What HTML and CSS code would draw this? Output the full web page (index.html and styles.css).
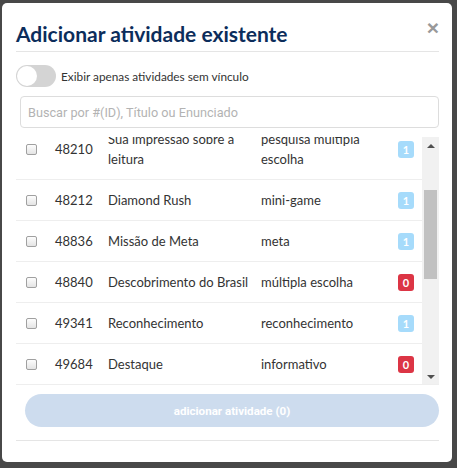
FILE: index.html
```html
<!DOCTYPE html>
<html lang="pt-BR">
<head>
  <meta charset="UTF-8" />
  <meta name="viewport" content="width=device-width, initial-scale=1.0" />
  <title>Adicionar atividade existente</title>
  <link rel="stylesheet" href="styles.css">
</head>
<body>
  <div class="modal">
    <header class="modal-header">
      <h2>Adicionar atividade existente</h2>
      <button class="close" type="button">&times;</button>
    </header>

    <!-- Filtro -->
    <label class="switch-row">
      <span class="switch"><span class="knob"></span></span>
      Exibir apenas atividades sem vínculo
    </label>

    <input class="search" type="text" placeholder="Buscar por #(ID), Título ou Enunciado" />

    <!-- Lista de atividades -->
    <div class="list-wrap">
      <div class="activity-list" id="activity-list">
        <div class="row"><input type="checkbox" /><span>47902</span><span>Quiz de Ciências</span><span>quiz</span><span class="badge info">1</span></div>
        <div class="row"><input type="checkbox" /><span>48105</span><span>Caça-palavras</span><span>mini-game</span><span class="badge info">1</span></div>
        <div class="row"><input type="checkbox" /><span>48210</span><span>Sua impressão sobre a leitura</span><span>pesquisa múltipla escolha</span><span class="badge info">1</span></div>
        <div class="row"><input type="checkbox" /><span>48212</span><span>Diamond Rush</span><span>mini-game</span><span class="badge info">1</span></div>
        <div class="row"><input type="checkbox" /><span>48836</span><span>Missão de Meta</span><span>meta</span><span class="badge info">1</span></div>
        <div class="row"><input type="checkbox" /><span>48840</span><span>Descobrimento do Brasil</span><span>múltipla escolha</span><span class="badge danger">0</span></div>
        <div class="row"><input type="checkbox" /><span>49341</span><span>Reconhecimento</span><span>reconhecimento</span><span class="badge info">1</span></div>
        <div class="row"><input type="checkbox" /><span>49684</span><span>Destaque</span><span>informativo</span><span class="badge danger">0</span></div>
        <div class="row"><input type="checkbox" /><span>49702</span><span>Boas-vindas</span><span>informativo</span><span class="badge info">1</span></div>
        <div class="row"><input type="checkbox" /><span>49815</span><span>Desafio Semanal</span><span>meta</span><span class="badge danger">0</span></div>
        <div class="row"><input type="checkbox" /><span>50021</span><span>Memória</span><span>mini-game</span><span class="badge info">1</span></div>
        <div class="row"><input type="checkbox" /><span>50133</span><span>Pesquisa de Clima</span><span>pesquisa</span><span class="badge info">1</span></div>
        <div class="row"><input type="checkbox" /><span>50247</span><span>Vídeo Institucional</span><span>vídeo</span><span class="badge danger">0</span></div>
      </div>
      <div class="scrollbar">
        <span class="arrow up"></span>
        <div class="track"><div class="thumb"></div></div>
        <span class="arrow down"></span>
      </div>
    </div>

    <button class="add-btn" type="button" disabled>adicionar atividade (0)</button>
    <div class="modal-footer"></div>
  </div>

  <script>
    document.getElementById('activity-list').scrollTop = 100;
  </script>
</body>
</html>
```

FILE: styles.css
```css
/* Reset */
* { box-sizing: border-box; margin: 0; padding: 0; }
body { background: #484848; font-family: Lato, "Noto Sans", sans-serif; color: #333; }

/* Modal box */
.modal { width: 450px; height: 459px; margin: 3px 0 0 2px; background: #fff; border-radius: 5px; padding: 0 13px 0 14px; }
.modal-header { height: 49px; display: flex; justify-content: space-between; align-items: flex-start; padding-top: 17px; border-bottom: 1px solid #e5e5e5; }
.modal-header h2 { font-size: 21px; font-weight: 700; line-height: 28px; color: #0c2d5b; }
.close { border: none; background: none; color: #999; font-family: Arial, "Liberation Sans", sans-serif; font-size: 21px; font-weight: bold; line-height: 14px; margin-top: 1px; cursor: pointer; }

/* Toggle */
.switch-row { display: flex; align-items: center; gap: 5px; margin-top: 13px; font-size: 11.8px; color: #333; }
.switch { width: 40px; height: 22px; border-radius: 11px; background: #d4d4d4; padding: 1px; display: flex; }
.knob { width: 20px; height: 20px; border-radius: 50%; background: #fff; }

/* Search */
.search { display: block; width: 419px; height: 32px; margin: 9px 0 0 4px; padding: 0 7px; border: 1px solid #ddd; border-radius: 4px; font-family: Roboto, Arial, sans-serif; font-size: 12.7px; }
.search::placeholder { color: #b3b3b3; }

/* List */
.list-wrap { display: flex; height: 248px; margin-top: 9px; border-bottom: 1px solid #eee; }
.activity-list { flex: 1; overflow: hidden; }
.row { display: grid; grid-template-columns: 29px 53px 153px 1fr 16px; align-items: center; padding: 10px 8px 10px 10px; border-bottom: 1px solid #eee; font-size: 13px; line-height: 20px; }
.row:last-child { border-bottom: none; }
.row span:nth-child(3) { padding-right: 10px; }
.row span:nth-child(4) { padding-right: 8px; }
.row input { appearance: none; width: 11px; height: 11px; margin: 0; border: 1px solid #a0a0a0; border-radius: 2px; background: linear-gradient(#fdfdfd, #e4e4e4); }

.badge { height: 17px; border-radius: 3px; color: #fff; font-size: 11px; font-weight: 700; line-height: 17px; text-align: center; }
.badge.info { background: #a6dbfb; }
.badge.danger { background: #dc3545; }

/* Fake scrollbar */
.scrollbar { width: 17px; background: #f1f1f1; display: flex; flex-direction: column; align-items: center; }
.arrow { width: 0; height: 0; border-left: 4px solid transparent; border-right: 4px solid transparent; }
.arrow.up { border-bottom: 4px solid #505050; margin: 7px 0 6px; }
.arrow.down { border-top: 4px solid #505050; margin: 6px 0 5px; }
.track { flex: 1; width: 100%; padding: 0 2px; }
.thumb { height: 89px; margin-top: 36px; background: #c1c1c1; }

/* Action */
.add-btn { display: block; width: 414px; height: 33px; margin: 9px 0 0 9px; border: none; border-radius: 17px; background: #cddcee; color: #fff; font-family: Roboto, Arial, sans-serif; font-size: 11.6px; font-weight: 700; }
.modal-footer { margin-top: 13px; border-top: 1px solid #e5e5e5; }
```
